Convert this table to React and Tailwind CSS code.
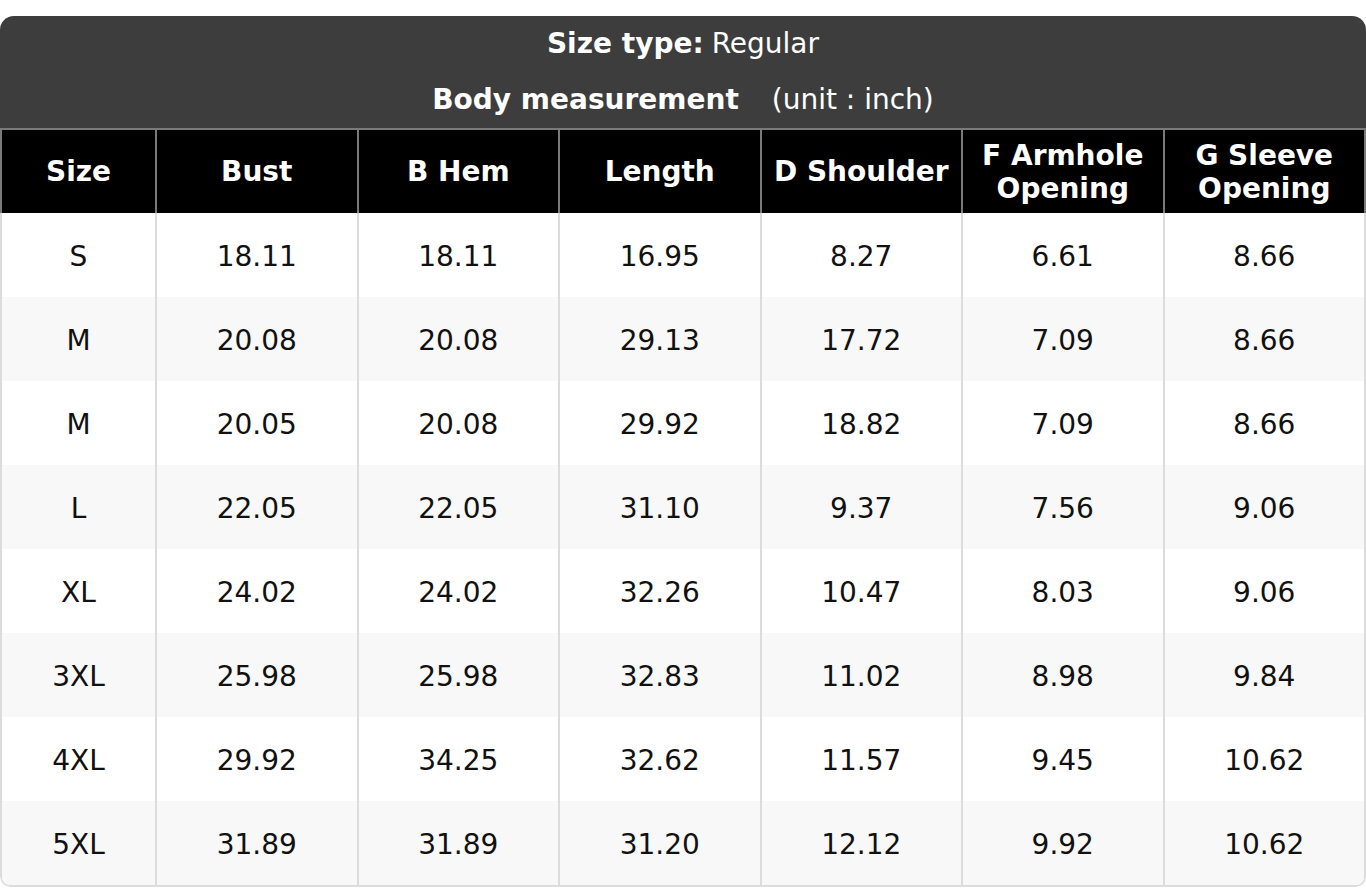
import React from "react";

const columns = [
  "Size",
  "Bust",
  "B Hem",
  "Length",
  "D Shoulder",
  ["F Armhole", "Opening"],
  ["G Sleeve", "Opening"],
];

const rows = [
  ["S", "18.11", "18.11", "16.95", "8.27", "6.61", "8.66"],
  ["M", "20.08", "20.08", "29.13", "17.72", "7.09", "8.66"],
  ["M", "20.05", "20.08", "29.92", "18.82", "7.09", "8.66"],
  ["L", "22.05", "22.05", "31.10", "9.37", "7.56", "9.06"],
  ["XL", "24.02", "24.02", "32.26", "10.47", "8.03", "9.06"],
  ["3XL", "25.98", "25.98", "32.83", "11.02", "8.98", "9.84"],
  ["4XL", "29.92", "34.25", "32.62", "11.57", "9.45", "10.62"],
  ["5XL", "31.89", "31.89", "31.20", "12.12", "9.92", "10.62"],
];

const gridCols = "grid grid-cols-[153px_repeat(6,minmax(0,1fr))]";

const SizeChart = () => {
  return (
    <div
      className="w-[1366px] bg-white pt-4"
      style={{ fontFamily: '"DejaVu Sans", Verdana, sans-serif' }}
    >
      <div className="rounded-t-[14px] rounded-b-[10px] overflow-hidden">
        {/* title block */}
        <div className="bg-[#3d3d3d] text-white text-[28px] leading-none">
          <div className="h-14 flex items-center justify-center">
            <span className="font-bold">Size type:</span>
            <span className="ml-2">Regular</span>
          </div>
          <div className="h-14 flex items-center justify-center">
            <span className="font-bold">Body measurement</span>
            <span className="ml-[33px]">(unit : inch)</span>
          </div>
        </div>

        {/* column headers */}
        <div className={`${gridCols} bg-black text-white border-t-2 border-x-2 border-[#7a7a7a] h-[85px]`}>
          {columns.map((col, i) => (
            <div
              key={i}
              className={`flex flex-col items-center justify-center text-center font-bold text-[28px] leading-[33px] ${
                i === 0 ? "" : "border-l-2 border-[#7a7a7a]"
              }`}
            >
              {Array.isArray(col) ? (
                <>
                  <span>{col[0]}</span>
                  <span>{col[1]}</span>
                </>
              ) : (
                <span>{col}</span>
              )}
            </div>
          ))}
        </div>

        {/* body rows */}
        <div className="border-x-2 border-b-2 border-[#dcdcdc] rounded-b-[10px] overflow-hidden">
          {rows.map((row, r) => (
            <div
              key={r}
              className={`${gridCols} h-[84px] ${r % 2 === 1 ? "bg-[#f8f8f8]" : "bg-white"}`}
            >
              {row.map((cell, c) => (
                <div
                  key={c}
                  className={`flex items-center justify-center pt-1 text-[28px] text-[#111] ${
                    c === 0 ? "" : "border-l-2 border-[#dcdcdc]"
                  }`}
                >
                  {cell}
                </div>
              ))}
            </div>
          ))}
        </div>
      </div>
    </div>
  );
};

export default function App() {
  return <SizeChart />;
}
